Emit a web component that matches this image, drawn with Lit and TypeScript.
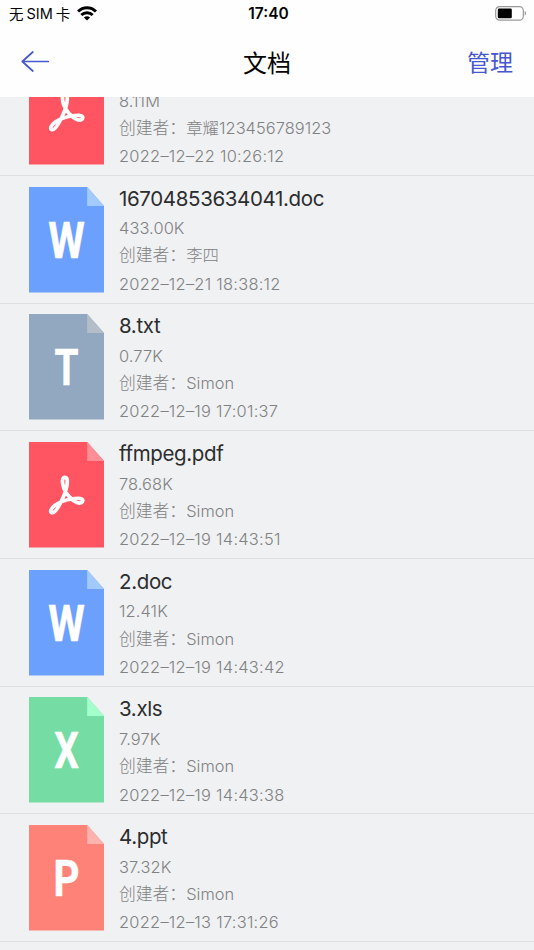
import { LitElement, html, css, svg } from "lit";
import { customElement, property } from "lit/decorators.js";

type Kind = "pdf" | "doc" | "txt" | "xls" | "ppt";
interface Doc { name: string; kind: Kind; size: string; author: string; time: string; }

const DOCS: Doc[] = [
  { name: "", kind: "pdf", size: "8.11M", author: "章耀123456789123", time: "2022–12–22 10:26:12" },
  { name: "16704853634041.doc", kind: "doc", size: "433.00K", author: "李四", time: "2022–12–21 18:38:12" },
  { name: "8.txt", kind: "txt", size: "0.77K", author: "Simon", time: "2022–12–19 17:01:37" },
  { name: "ffmpeg.pdf", kind: "pdf", size: "78.68K", author: "Simon", time: "2022–12–19 14:43:51" },
  { name: "2.doc", kind: "doc", size: "12.41K", author: "Simon", time: "2022–12–19 14:43:42" },
  { name: "3.xls", kind: "xls", size: "7.97K", author: "Simon", time: "2022–12–19 14:43:38" },
  { name: "4.ppt", kind: "ppt", size: "37.32K", author: "Simon", time: "2022–12–13 17:31:26" },
];

const LOOK: Record<Kind, { body: string; fold: string; letter: string; width: number }> = {
  pdf: { body: "#ff5562", fold: "#ff8f96", letter: "", width: 0 },
  doc: { body: "#6ca0ff", fold: "#a2cbfb", letter: "W", width: 36.5 },
  txt: { body: "#92a7c0", fold: "#b4bec9", letter: "T", width: 24 },
  xls: { body: "#75dca3", fold: "#a5ffcd", letter: "X", width: 24.5 },
  ppt: { body: "#ff8278", fold: "#ffb3af", letter: "P", width: 26 },
};

@customElement("file-icon")
class FileIcon extends LitElement {
  @property() kind: Kind = "doc";
  static styles = css`
    :host { display: block; width: 75px; height: 106px; }
    svg { display: block; }
    .letter { font: 700 50px Roboto, "Liberation Sans", sans-serif; fill: #fff; stroke: #fff; stroke-width: 0.5px; }
  `;
  render() {
    const k = LOOK[this.kind];
    return html`<svg width="75" height="106" viewBox="0 0 75 106">
      <path d="M0 0H58.2L75 19V105.6H0Z" fill=${k.body}></path>
      <path d="M58.2 0L75 19H58.2Z" fill=${k.fold}></path>
      ${k.letter
        ? svg`<text class="letter" x=${37.6 - k.width / 2} y="71" textLength=${k.width} lengthAdjust="spacingAndGlyphs">${k.letter}</text>`
        : svg`<path d="M36 35.300C33 35.300 32.800 40.500 34.800 46C36.500 51 42 58 48 60.500C51.500 61.800 53.800 60.500 53.800 58.500C53.500 55.700 48 55.900 42 57C36 58.200 30.500 60 26 63.300C21.500 66.600 20.900 70 22.800 70.700C25.500 71.400 29 66 32 60C35.500 53 38.300 44.500 38.300 39.800C38.300 36.800 37.600 35.300 36 35.300Z" fill="none" stroke="#fff" stroke-width="3.700" stroke-linejoin="round"></path>`}
    </svg>`;
  }
}

@customElement("doc-row")
class DocRow extends LitElement {
  @property({ attribute: false }) doc!: Doc;
  static styles = css`
    :host { display: flex; box-sizing: border-box; height: 127.7px; flex: none; padding: 10.8px 29px 0; gap: 15px; border-bottom: 1px solid #dddfe1; }
    .info { white-space: nowrap; font-family: Inter, "Noto Sans CJK SC", sans-serif; }
    .name { font-size: 20.5px; line-height: 24px; height: 28.5px; letter-spacing: -0.36px; color: #2c2d2e; }
    .meta { font-size: 16.4px; line-height: 27.4px; height: 27.3px; font-weight: 300; letter-spacing: 0.1px; color: #808182; }
    .author { line-height: 25px; letter-spacing: 0.05px; }
    .time { letter-spacing: 0.27px; line-height: 28px; }
    .label { font-family: "Noto Sans CJK SC", sans-serif; font-size: 16.8px; letter-spacing: 0; }
  `;
  render() {
    const d = this.doc;
    return html`<file-icon .kind=${d.kind}></file-icon>
      <div class="info">
        <div class="name">${d.name}</div>
        <div class="meta">${d.size}</div>
        <div class="meta author"><span class="label">创建者：</span>${d.author}</div>
        <div class="meta time">${d.time}</div>
      </div>`;
  }
}

@customElement("app-root")
class AppRoot extends LitElement {
  static styles = css`
    :host { display: flex; flex-direction: column; width: 534px; height: 950px; overflow: hidden; background: #f0f1f3; font-family: Inter, "Noto Sans CJK SC", sans-serif; color: #050505; }
    header { flex: none; height: 97px; background: #fefefe; }
    .bar { display: grid; grid-template-columns: 1fr auto 1fr; align-items: center; }
    .status { height: 27px; padding: 0 7px 0 9px; font-size: 14.5px; }
    .carrier { display: flex; align-items: center; gap: 3px; white-space: nowrap; }
    .wifi { margin-left: 4px; }
    .time { font-weight: 600; font-size: 15.5px; padding-left: 1px; }
    .right { justify-self: end; }
    .nav { height: 70px; padding: 0 21px; }
    .title { font-size: 24px; line-height: 30px; padding-top: 3px; }
    .manage { font-size: 23px; line-height: 30px; padding-top: 1px; color: #4657cf; }
    svg { display: block; }
    main { flex: 1; min-height: 0; overflow: hidden; }
    .list { display: flex; flex-direction: column; margin-top: -48.8px; }
  `;
  render() {
    return html`<header>
        <div class="bar status">
          <div class="carrier"><span>无</span><span>SIM</span><span>卡</span>
            <svg class="wifi" width="20" height="15" viewBox="0 0 20 15">
              <g fill="none" stroke="#000" stroke-width="2.900">
                <path d="M1 5.500C6 .4 14 .4 19 5.500"></path>
                <path d="M4.300 9C7.500 5.900 12.500 5.900 15.700 9"></path>
              </g>
              <path d="M10 14.500L6.900 11.400C8.700 9.900 11.300 9.900 13.100 11.400Z"></path>
            </svg>
          </div>
          <div class="time">17:40</div>
          <svg class="right" width="32" height="16" viewBox="0 0 32 16">
            <rect x=".7" y=".6" width="27.600" height="13.600" rx="4" fill="none" stroke="#999" stroke-width="1.200"></rect>
            <rect x="2.800" y="2.600" width="14" height="9.600" rx="1.300"></rect>
            <path d="M29.700 5.100C31.500 5.600 31.500 9.100 29.700 9.600Z" fill="#999"></path>
          </svg>
        </div>
        <div class="bar nav">
          <svg width="29" height="24" viewBox="0 0 29 24" fill="none" stroke="#4657cf" stroke-width="1.700" stroke-linecap="round" stroke-linejoin="round">
            <path d="M27.300 11.500H1.300M11.800 2L1.300 11.500L11.800 21"></path>
          </svg>
          <div class="title">文档</div>
          <div class="manage right">管理</div>
        </div>
      </header>
      <main><div class="list">${DOCS.map((d) => html`<doc-row .doc=${d}></doc-row>`)}</div></main>`;
  }
}
